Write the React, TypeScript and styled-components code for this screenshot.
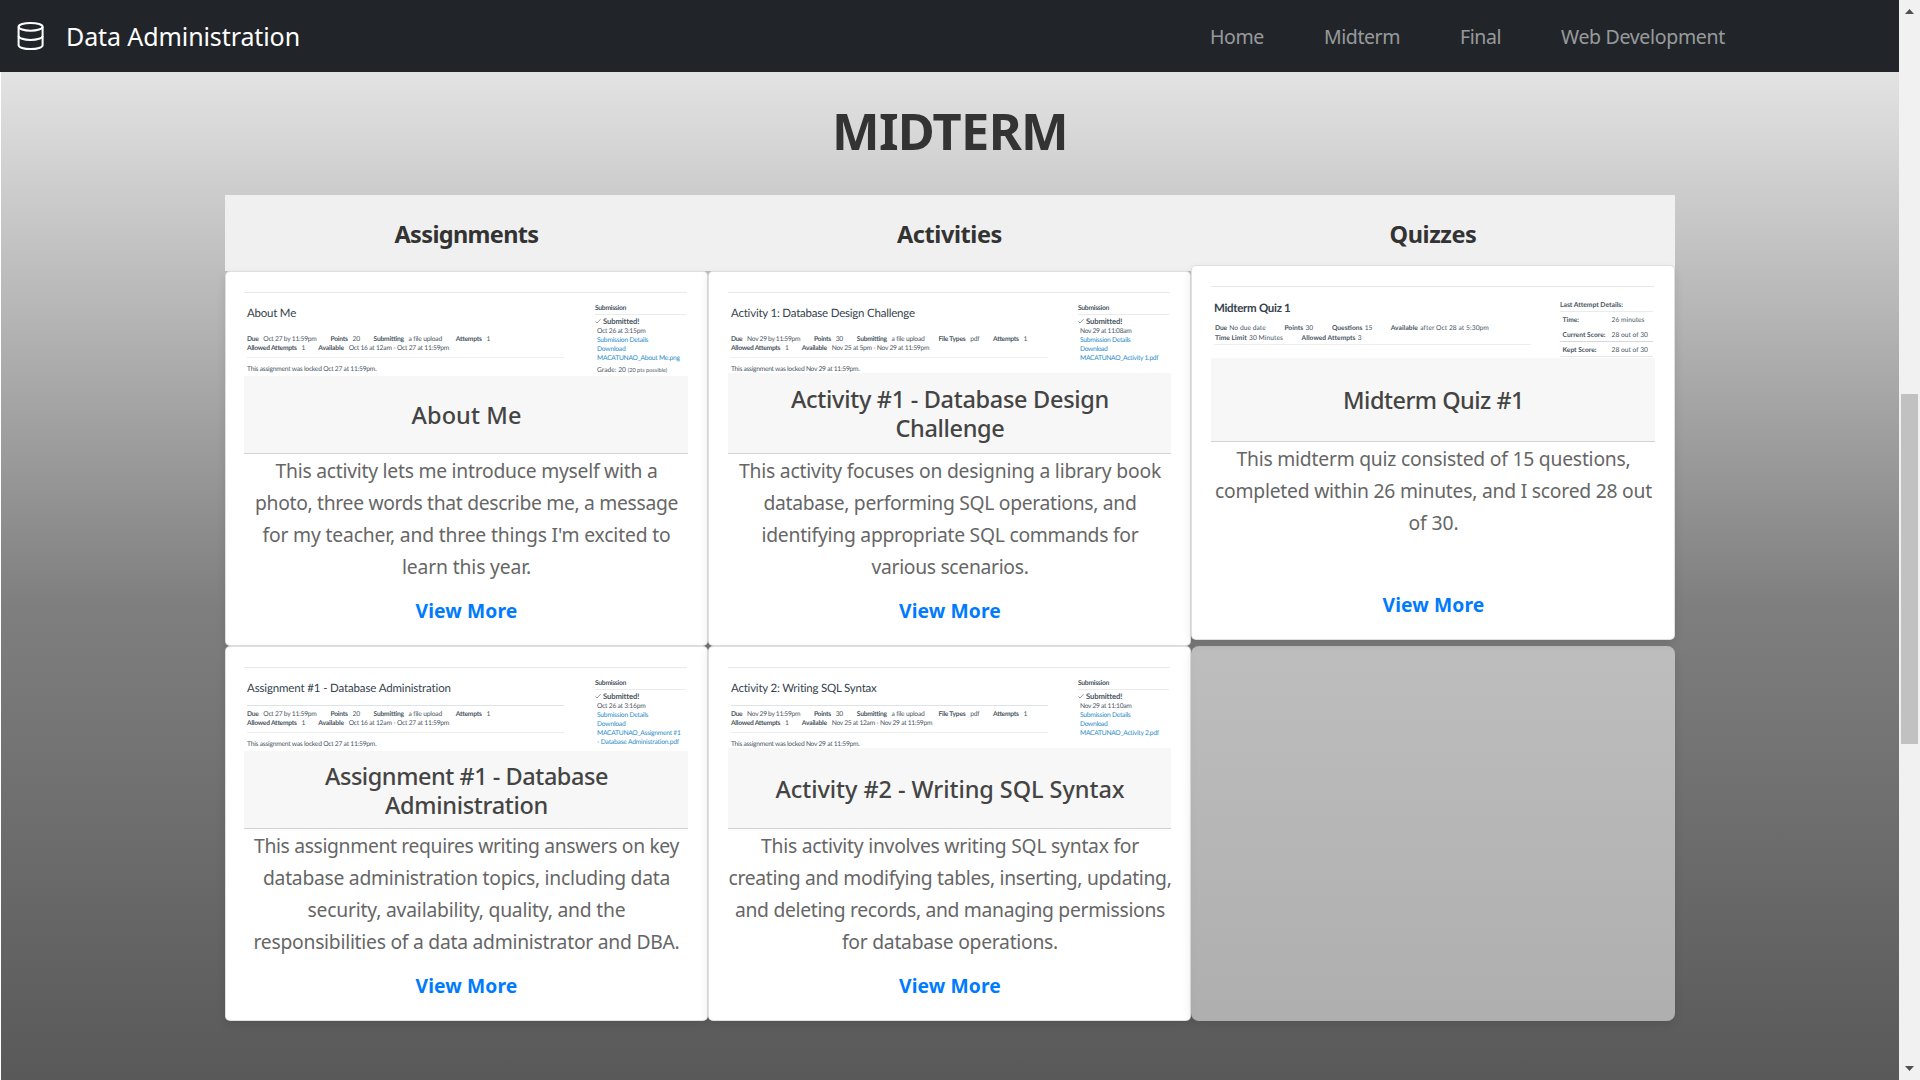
import React, { useLayoutEffect, useRef, useState } from "react";
import styled, { createGlobalStyle, css } from "styled-components";

const GlobalStyle = createGlobalStyle`
  *, *::before, *::after { box-sizing: border-box; }
  body {
    margin: 0;
    overflow: hidden;
    background: #fff;
    font-family: "Segoe UI", "Noto Sans", "Open Sans", sans-serif;
  }
`;

const Window = styled.div`
  display: flex;
  width: 1920px;
  height: 1080px;
  overflow: hidden;
`;

const Page = styled.div`
  display: flex;
  flex-direction: column;
  width: 1899px;
`;

const Navbar = styled.header`
  display: flex;
  flex: none;
  align-items: center;
  height: 72px;
  padding: 0 174px 0 14px;
  background: #212529;
`;

const Brand = styled.a`
  display: flex;
  align-items: center;
  gap: 19px;
  flex: 1;
  color: #fff;
  font-size: 25px;
  line-height: 38px;
`;

const NavLinks = styled.nav`
  display: flex;
  gap: 60px;
  padding-top: 2px;
  color: rgba(255, 255, 255, 0.55);
  font-size: 19.5px;
  line-height: 30px;
`;

const Section = styled.main`
  flex: 1;
  margin-left: 1px;
  padding: 24px 0 0 224px;
  background: linear-gradient(180deg, #e3e3e3 0, #7f7f7f 530px, #595959 1008px);
`;

const Heading = styled.h1`
  width: 1450px;
  margin: 0;
  height: 99px;
  color: #333;
  font-size: 50.5px;
  font-weight: 700;
  line-height: 70px;
  text-align: center;
`;

const Board = styled.div`
  display: grid;
  grid-template-columns: 483px 483px 484px;
  grid-template-rows: 76px 375px 375px;
  width: 1450px;
`;

const ColumnHead = styled.div`
  display: flex;
  align-items: center;
  justify-content: center;
  padding-top: 1px;
  background: #f0f0f0;
  color: #333;
  font-size: 23.5px;
  font-weight: 700;
`;

const Card = styled.article<{ $raised?: boolean }>`
  display: flex;
  flex-direction: column;
  padding: 19px 19px 18px;
  border: 1px solid rgba(0, 0, 0, 0.125);
  border-radius: 5px;
  background: #fff;
  box-shadow: 0 4px 10px rgba(0, 0, 0, 0.1);
  &:nth-child(3n + 1) {
    padding-left: 18px;
  }
  ${(p) =>
    p.$raised &&
    css`
      transform: translateY(-6px);
    `}
`;

const EmptyCell = styled.div`
  border-radius: 8px;
  background: rgba(255, 255, 255, 0.5);
  box-shadow: 0 4px 10px rgba(0, 0, 0, 0.1);
`;

const CardTop = styled.div<{ $height: number }>`
  display: flex;
  flex-direction: column;
  flex: none;
  height: ${(p) => p.$height}px;
`;

const CardTitle = styled.h3`
  display: flex;
  flex: 1;
  flex-direction: column;
  align-items: center;
  justify-content: center;
  margin: 0;
  padding: 2px 0 0 1px;
  border-bottom: 1px solid #d3d3d3;
  background: #f7f7f7;
  color: #444;
  font-size: 23.5px;
  font-weight: 500;
  line-height: 28.6px;
`;

const CardText = styled.p`
  display: flex;
  flex: 1;
  flex-direction: column;
  align-items: center;
  margin: 0;
  padding: 1px 0 0 1px;
  color: #666;
  font-size: 19.3px;
  line-height: 32px;
`;

const ViewMore = styled.a`
  align-self: center;
  padding-left: 1px;
  color: #007bff;
  font-size: 19.3px;
  font-weight: 700;
  line-height: 32px;
`;

const Thumb = styled.div<{ $height: number }>`
  display: flex;
  flex: none;
  justify-content: space-between;
  height: ${(p) => p.$height - 1}px;
  margin: 1px 1px 0 0;
  padding: 0 1px 0 3px;
  border-top: 1px solid #e6e9ea;
  color: #4a565f;
  font-family: Lato, sans-serif;
  font-size: 6.7px;
  line-height: 9.1px;
  text-rendering: geometricPrecision;
`;

const ThumbMain = styled.div`
  width: 317px;
`;

const ThumbTitle = styled.div<{ $quiz?: boolean }>`
  height: ${(p) => (p.$quiz ? 36 : 37)}px;
  padding-top: ${(p) => (p.$quiz ? 14 : 13)}px;
  color: #35434d;
  font-size: 11.5px;
  font-weight: ${(p) => (p.$quiz ? 700 : 400)};
  line-height: 15px;
`;

const MetaBlock = styled.div<{ $lined?: boolean; $quiz?: boolean }>`
  display: flex;
  flex-direction: column;
  height: ${(p) => (p.$quiz ? 23 : 28)}px;
  padding: ${(p) => (p.$quiz ? "0 0 0 1px" : "4px 0 0")};
  margin-top: ${(p) => (p.$quiz ? -1 : 0)}px;
  border-top: 1px solid ${(p) => (p.$lined ? "#dde2e5" : "transparent")};
  border-bottom: 1px solid #eceeef;
  line-height: ${(p) => (p.$quiz ? 10.1 : 9.1)}px;
`;

const MetaRow = styled.div<{ $quiz?: boolean }>`
  display: flex;
  gap: ${(p) => (p.$quiz ? 18.6 : 13.8)}px;
`;

const Meta = styled.span<{ $quiz?: boolean }>`
  display: flex;
  gap: ${(p) => (p.$quiz ? 2.3 : 4.8)}px;
`;

const Locked = styled.div`
  padding-top: 6.5px;
`;

const ThumbSide = styled.div<{ $quiz?: boolean }>`
  width: ${(p) => (p.$quiz ? 93 : 91)}px;
  padding-top: ${(p) => (p.$quiz ? 14 : 10.5)}px;
`;

const SideHead = styled.div`
  height: 11px;
  border-bottom: 1px solid #e9ebec;
  font-size: 6.8px;
  font-weight: 700;
`;

const Submitted = styled.div`
  display: flex;
  align-items: center;
  gap: 2px;
  padding-top: 1px;
  font-size: 7.7px;
  font-weight: 700;
  line-height: 10px;
`;

const SideList = styled.div`
  display: flex;
  flex-direction: column;
  align-items: flex-start;
  padding: 1px 0 0 2px;
  white-space: nowrap;
`;

const SideLink = styled.span`
  color: #2a8cc8;
`;

const Grade = styled.span`
  padding-top: 3.5px;
  small { font-size: 5.6px; }
`;

const ScoreRow = styled.div<{ $line?: string }>`
  display: grid;
  grid-template-columns: 49px 1fr;
  height: 15px;
  padding: 4px 0 0 2.5px;
  border-bottom: 1px solid ${(p) => p.$line || "transparent"};
`;

const Scrollbar = styled.div`
  display: flex;
  flex-direction: column;
  align-items: center;
  width: 21px;
  background: #f1f1f1;
`;

const ScrollThumb = styled.div`
  width: 17px;
  height: 350px;
  margin: 378px 0 322px;
  background: #c1c1c1;
`;

const Arrow = styled.i<{ $down?: boolean }>`
  flex: none;
  width: 9px;
  height: 5px;
  margin: ${(p) => (p.$down ? "0" : "9px 0 2px")};
  background: #505050;
  clip-path: ${(p) =>
    p.$down ? "polygon(0 0, 100% 0, 50% 100%)" : "polygon(50% 0, 100% 100%, 0 100%)"};
`;

const FitSpan = styled.span`
  display: inline-block;
  white-space: nowrap;
`;

/** One line of text whose tracking is adjusted to a given measure. */
function Fit({ w, children }: { w: number; children: string }) {
  const ref = useRef<HTMLSpanElement>(null);
  const [tracking, setTracking] = useState(0);
  useLayoutEffect(() => {
    if (!ref.current) return;
    const natural = ref.current.getBoundingClientRect().width;
    setTracking((w - natural) / children.length);
  }, [w, children]);
  return (
    <FitSpan ref={ref} style={{ letterSpacing: tracking }}>
      {children}
    </FitSpan>
  );
}

type Line = [string, number];
type Pair = [string, number, string, number];

interface Work {
  shot: string;
  shotWidth: number;
  shotHeight: number;
  lined?: boolean;
  rows: Pair[][];
  locked: Line;
  date: Line;
  links: Line[];
  grade?: boolean;
  title: Line[];
  text: Line[];
}

const aboutMe: Work = {
  shot: "About Me",
  shotWidth: 49,
  shotHeight: 85,
  rows: [
    [["Due", 11.5, "Oct 27 by 11:59pm", 53.3], ["Points", 17.3, "20", 7.3], ["Submitting", 30, "a file upload", 33.3], ["Attempts", 25.5, "1", 3]],
    [["Allowed Attempts", 49.5, "1", 3], ["Available", 25.5, "Oct 16 at 12am - Oct 27 at 11:59pm", 100.5]],
  ],
  locked: ["This assignment was locked Oct 27 at 11:59pm.", 129.5],
  date: ["Oct 26 at 3:15pm", 48.5],
  links: [["Submission Details", 51.3], ["Download", 28.5], ["MACATUNAO_About Me.png", 82.7]],
  grade: true,
  title: [["About Me", 110]],
  text: [
    ["This activity lets me introduce myself with a", 382],
    ["photo, three words that describe me, a message", 423],
    ["for my teacher, and three things I'm excited to", 408],
    ["learn this year.", 129],
  ],
};

const assignment1: Work = {
  shot: "Assignment #1 - Database Administration",
  shotWidth: 204,
  shotHeight: 85,
  lined: true,
  rows: aboutMe.rows,
  locked: aboutMe.locked,
  date: ["Oct 26 at 3:16pm", 48.5],
  links: [["Submission Details", 51.3], ["Download", 28.5], ["MACATUNAO_Assignment #1", 83.5], ["- Database Administration.pdf", 82]],
  title: [["Assignment #1 - Database", 283], ["Administration", 163]],
  text: [
    ["This assignment requires writing answers on key", 425],
    ["database administration topics, including data", 407],
    ["security, availability, quality, and the", 318],
    ["responsibilities of a data administrator and DBA.", 426],
  ],
};

const activityRows = (available: string, width: number): Pair[][] => [
  [["Due", 11.3, "Nov 29 by 11:59pm", 53], ["Points", 17, "30", 7.3], ["Submitting", 29.7, "a file upload", 33], ["File Types", 27, "pdf", 9], ["Attempts", 25.3, "1", 3]],
  [["Allowed Attempts", 49, "1", 3], ["Available", 25, available, width]],
];

const activity1: Work = {
  shot: "Activity 1: Database Design Challenge",
  shotWidth: 184,
  shotHeight: 82,
  rows: activityRows("Nov 25 at 5pm - Nov 29 at 11:59pm", 97.5),
  locked: ["This assignment was locked Nov 29 at 11:59pm.", 128.5],
  date: ["Nov 29 at 11:08am", 51.5],
  links: [["Submission Details", 50.5], ["Download", 27.5], ["MACATUNAO_Activity 1.pdf", 78.5]],
  title: [["Activity #1 - Database Design", 318], ["Challenge", 109]],
  text: [
    ["This activity focuses on designing a library book", 422],
    ["database, performing SQL operations, and", 373],
    ["identifying appropriate SQL commands for", 377],
    ["various scenarios.", 157],
  ],
};

const activity2: Work = {
  shot: "Activity 2: Writing SQL Syntax",
  shotWidth: 146,
  shotHeight: 82,
  lined: true,
  rows: activityRows("Nov 25 at 12am - Nov 29 at 11:59pm", 100.5),
  locked: activity1.locked,
  date: ["Nov 29 at 11:10am", 51.5],
  links: [["Submission Details", 50.5], ["Download", 27.5], ["MACATUNAO_Activity 2.pdf", 79]],
  title: [["Activity #2 - Writing SQL Syntax", 349]],
  text: [
    ["This activity involves writing SQL syntax for", 378],
    ["creating and modifying tables, inserting, updating,", 443],
    ["and deleting records, and managing permissions", 430],
    ["for database operations.", 216],
  ],
};

const quizRows: Pair[][] = [
  [["Due", 12, "No due date", 36.5], ["Points", 18.7, "30", 8], ["Questions", 30.5, "15", 7.3], ["Available", 27.3, "after Oct 28 at 5:30pm", 68.5]],
  [["Time Limit", 31.7, "30 Minutes", 34], ["Allowed Attempts", 53.7, "3", 4]],
];

const quizTitle: Line[] = [["Midterm Quiz #1", 181]];
const quizText: Line[] = [
  ["This midterm quiz consisted of 15 questions,", 394],
  ["completed within 26 minutes, and I scored 28 out", 437],
  ["of 30.", 50],
];

const Lines = ({ lines }: { lines: Line[] }) => (
  <>
    {lines.map(([t, w]) => (
      <Fit key={t} w={w}>{t}</Fit>
    ))}
  </>
);

const MetaRows = ({ rows, quiz }: { rows: Pair[][]; quiz?: boolean }) => (
  <>
    {rows.map((row, i) => (
      <MetaRow key={i} $quiz={quiz}>
        {row.map(([label, lw, value, vw]) => (
          <Meta key={label} $quiz={quiz}>
            <b><Fit w={lw}>{label}</Fit></b>
            <span><Fit w={vw}>{value}</Fit></span>
          </Meta>
        ))}
      </MetaRow>
    ))}
  </>
);

const DatabaseIcon = () => (
  <svg width="33" height="32" viewBox="0 0 33 32" fill="none" stroke="#fff" strokeWidth="2">
    <ellipse cx="16.6" cy="6.8" rx="12" ry="3.9" />
    <path d="M4.6 6.8v18.4c0 2.2 5.4 3.9 12 3.9s12-1.7 12-3.9V6.8" />
    <path d="M4.6 16c0 2.2 5.4 3.9 12 3.9s12-1.7 12-3.9" />
  </svg>
);

const Check = () => (
  <svg width="6" height="6" viewBox="0 0 6 6" fill="none" stroke="#4a565f" strokeWidth="0.6">
    <path d="M0.4 3.4 2 5 5.6 1.2" />
  </svg>
);

function WorkCard({ work }: { work: Work }) {
  return (
    <Card>
      <CardTop $height={163}>
        <Thumb $height={work.shotHeight}>
          <ThumbMain>
            <ThumbTitle><Fit w={work.shotWidth}>{work.shot}</Fit></ThumbTitle>
            <MetaBlock $lined={work.lined}><MetaRows rows={work.rows} /></MetaBlock>
            <Locked><Lines lines={[work.locked]} /></Locked>
          </ThumbMain>
          <ThumbSide>
            <SideHead><Fit w={31}>Submission</Fit></SideHead>
            <Submitted><Check /><Fit w={36}>Submitted!</Fit></Submitted>
            <SideList>
              <Lines lines={[work.date]} />
              {work.links.map(([t, w]) => (
                <SideLink key={t}><Fit w={w}>{t}</Fit></SideLink>
              ))}
              {work.grade && <Grade>Grade: 20 <small>(20 pts possible)</small></Grade>}
            </SideList>
          </ThumbSide>
        </Thumb>
        <CardTitle><Lines lines={work.title} /></CardTitle>
      </CardTop>
      <CardText><Lines lines={work.text} /></CardText>
      <ViewMore><Fit w={102}>View More</Fit></ViewMore>
    </Card>
  );
}

function QuizCard() {
  return (
    <Card $raised>
      <CardTop $height={157}>
        <Thumb $height={73}>
          <ThumbMain>
            <ThumbTitle $quiz><Fit w={76.5}>Midterm Quiz 1</Fit></ThumbTitle>
            <MetaBlock $quiz><MetaRows rows={quizRows} quiz /></MetaBlock>
          </ThumbMain>
          <ThumbSide $quiz>
            <SideHead><Fit w={62.7}>Last Attempt Details:</Fit></SideHead>
            <ScoreRow><b><Fit w={16.5}>Time:</Fit></b><span><Fit w={33}>26 minutes</Fit></span></ScoreRow>
            <ScoreRow $line="#d5d9dc"><b><Fit w={43}>Current Score:</Fit></b><span><Fit w={36.5}>28 out of 30</Fit></span></ScoreRow>
            <ScoreRow $line="#e3e6e8"><b><Fit w={34}>Kept Score:</Fit></b><span><Fit w={36.5}>28 out of 30</Fit></span></ScoreRow>
          </ThumbSide>
        </Thumb>
        <CardTitle><Lines lines={quizTitle} /></CardTitle>
      </CardTop>
      <CardText><Lines lines={quizText} /></CardText>
      <ViewMore><Fit w={102}>View More</Fit></ViewMore>
    </Card>
  );
}

export default function App() {
  return (
    <>
      <GlobalStyle />
      <Window>
        <Page>
          <Navbar>
            <Brand><DatabaseIcon /><Fit w={234}>Data Administration</Fit></Brand>
            <NavLinks>
              <Fit w={54}>Home</Fit>
              <Fit w={76}>Midterm</Fit>
              <Fit w={41}>Final</Fit>
              <Fit w={164}>Web Development</Fit>
            </NavLinks>
          </Navbar>
          <Section>
            <Heading><Fit w={236}>MIDTERM</Fit></Heading>
            <Board>
              <ColumnHead><Fit w={144}>Assignments</Fit></ColumnHead>
              <ColumnHead><Fit w={105}>Activities</Fit></ColumnHead>
              <ColumnHead><Fit w={87}>Quizzes</Fit></ColumnHead>
              <WorkCard work={aboutMe} />
              <WorkCard work={activity1} />
              <QuizCard />
              <WorkCard work={assignment1} />
              <WorkCard work={activity2} />
              <EmptyCell />
            </Board>
          </Section>
        </Page>
        <Scrollbar>
          <Arrow />
          <ScrollThumb />
          <Arrow $down />
        </Scrollbar>
      </Window>
    </>
  );
}
